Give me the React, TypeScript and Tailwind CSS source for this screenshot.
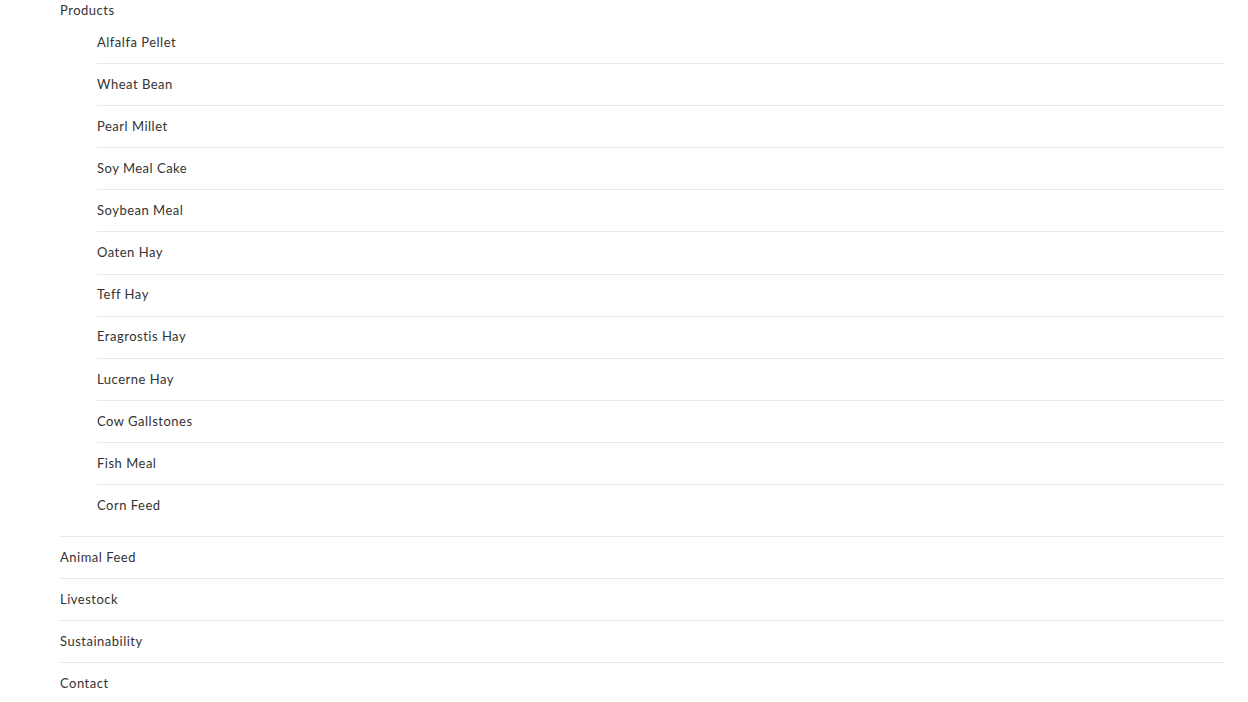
import React from 'react'

const PRODUCTS = [
  'Alfalfa Pellet',
  'Wheat Bean',
  'Pearl Millet',
  'Soy Meal Cake',
  'Soybean Meal',
  'Oaten Hay',
  'Teff Hay',
  'Eragrostis Hay',
  'Lucerne Hay',
  'Cow Gallstones',
  'Fish Meal',
  'Corn Feed',
]

const TOP_LINKS = ['Animal Feed', 'Livestock', 'Sustainability', 'Contact']

export default function App() {
  return (
    <div className="min-h-[702px] bg-white text-[13px] text-[#333] tracking-[0.5px] font-['Lato','Liberation_Sans',sans-serif] overflow-hidden">
      <ul className="ml-[60px] mr-[23px]">
        <li className="border-b border-[#e8e8e8]">
          <a className="flex h-[22px] pb-[1px] items-center">Products</a>
          <ul className="ml-[37px] pb-[10px]">
            {PRODUCTS.map((name, i) => (
              <li
                key={name}
                className={i < PRODUCTS.length - 1 ? 'border-b border-[#e8e8e8]' : ''}
              >
                <a className="flex h-[41.1px] items-center">{name}</a>
              </li>
            ))}
          </ul>
        </li>
        {TOP_LINKS.map((name, i) => (
          <li
            key={name}
            className={i < TOP_LINKS.length - 1 ? 'border-b border-[#e8e8e8]' : ''}
          >
            <a className="flex h-[41px] items-center">{name}</a>
          </li>
        ))}
      </ul>
    </div>
  )
}
